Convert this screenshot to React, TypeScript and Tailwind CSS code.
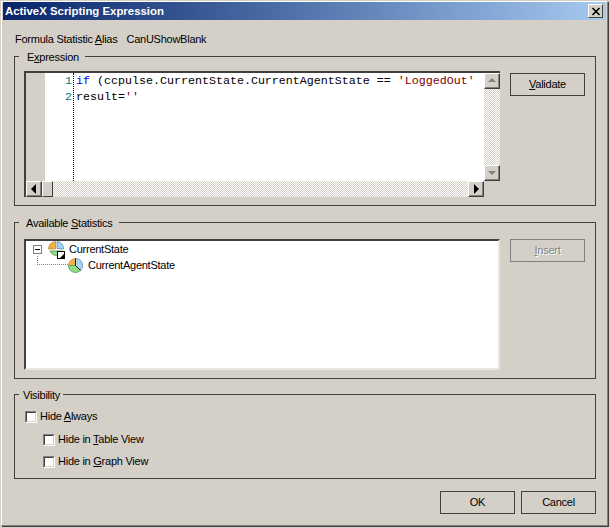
const F = "[font-family:'Liberation_Sans',Arial,sans-serif]";

function Btn({ children, disabled, className }: { children: React.ReactNode; disabled?: boolean; className?: string }) {
  return (
    <div className={`w-[75px] h-[23px] shrink-0 border flex items-center justify-center ${disabled ? "text-[#808080] [text-shadow:1px_1px_0_#fff] border-[#808080]" : "text-black border-[#404040]"} ${className ?? ""}`}>
      {children}
    </div>
  );
}

function Check({ label, className }: { label: React.ReactNode; className?: string }) {
  return (
    <div className={`flex items-center gap-[3px] h-[13px] ${className ?? ""}`}>
      <div className="w-[12px] h-[12px] shrink-0 border border-t-[#808080] border-l-[#808080] border-r-white border-b-white">
        <div className="w-full h-full bg-white border border-t-[#404040] border-l-[#404040] border-r-[#d4d0c8] border-b-[#d4d0c8]" />
      </div>
      <span>{label}</span>
    </div>
  );
}

function Group({ legend, legendClass, className, children }: { legend: React.ReactNode; legendClass: string; className: string; children: React.ReactNode }) {
  return (
    <fieldset className={`border border-[#404040] ml-[14px] w-[582px] ${className}`}>
      <legend className={`ml-[4px] h-[14px] leading-[16px] ${legendClass}`}>{legend}</legend>
      {children}
    </fieldset>
  );
}

function ScrollBtn({ dir, grey, className }: { dir: "up" | "down" | "left" | "right"; grey?: boolean; className?: string }) {
  const pts = { up: "4,9 8,5 12,9", down: "4,6 12,6 8,10", left: "10,3 5,8 10,13", right: "6,3 11,8 6,13" }[dir];
  return (
    <div className={`w-[16px] h-[16px] shrink-0 bg-[#d4d0c8] border border-t-white border-l-white border-r-[#404040] border-b-[#404040] shadow-[inset_-1px_-1px_0_#808080] ${className ?? ""}`}>
      <svg width="14" height="14" viewBox="1 1 14 14">
        <polygon points={pts} fill={grey ? "#808080" : "#000"} />
      </svg>
    </div>
  );
}

const Hatch = "bg-[repeating-conic-gradient(#ffffff_0_25%,#d4d0c8_0_50%)] bg-[length:2px_2px]";

function GroupPie() {
  return (
    <svg width="16" height="17" viewBox="0 0 16 17" className="shrink-0">
      <path d="M7.5 8 L7.5 0.5 A7.5 7.5 0 0 0 0.5 8 Z" fill="#f4b042" stroke="#b88428" strokeWidth="0.7" />
      <path d="M9 7.5 L9 0.5 A7 7 0 0 1 15.5 8 Z" fill="#a8d4f4" stroke="#4c80a8" strokeWidth="0.7" />
      <path d="M2 10 L15 10 A7 7 0 0 1 2 10 Z" fill="#90dc88" stroke="#3c8c40" strokeWidth="0.7" />
    </svg>
  );
}

function Pie() {
  return (
    <svg width="15" height="15" viewBox="0 0 15 15" className="shrink-0">
      <path d="M7.5 7.5 L7.5 0.5 A7 7 0 0 0 0.5 7.5 Z" fill="#f4b042" stroke="#b88428" strokeWidth="0.6" />
      <path d="M7.5 7.5 L7.5 0.5 A7 7 0 0 1 12.5 12.5 Z" fill="#a8d4f4" stroke="#3c6c90" strokeWidth="0.6" />
      <path d="M7.5 7.5 L12.5 12.5 A7 7 0 0 1 0.5 7.5 Z" fill="#90dc88" stroke="#3c8c40" strokeWidth="0.6" />
      <path d="M7.5 0.5 L7.5 7.5 L12.5 12.5" fill="none" stroke="#202020" strokeWidth="1" />
    </svg>
  );
}

export default function App() {
  return (
    <div className={`w-[610px] h-[528px] bg-[#d4d0c8] overflow-hidden ${F} text-black text-[11px] tracking-[-0.25px] p-px`}>
      <div className="w-[607px] h-[525px] border-l border-t border-white border-r border-b border-r-[#808080] border-b-[#808080] shadow-[1px_1px_0_#404040] flex flex-col pl-px">
        <div className="h-[18px] w-[603px] shrink-0 bg-gradient-to-r from-[#0a246a] to-[#a6caf0] flex items-center justify-between pl-[2px] pr-[3px]">
          <span className="text-white font-bold text-[11.4px] tracking-normal pt-[2px]">ActiveX Scripting Expression</span>
          <div className="w-[15px] h-[14px] bg-[#d4d0c8] border border-t-white border-l-white border-r-[#404040] border-b-[#404040] flex items-center justify-center">
            <svg width="10" height="9" viewBox="0 0 10 9"><path d="M1.5 1 L8.5 8 M8.5 1 L1.5 8" stroke="#000" strokeWidth="1.7" /></svg>
          </div>
        </div>
        <div className="-ml-[3px] flex flex-col">
          <div className="h-[29px] pl-[15px] pt-[9px] flex gap-[9px] leading-[20px]">
            <span>Formula Statistic <u>A</u>lias</span>
            <span>CanUShowBlank</span>
          </div>
          <Group legend={<>E<u>x</u>pression</>} legendClass="pl-[8px] pr-[6px]" className="h-[157px]">
            <div className="flex items-start gap-[10px] pl-[9px] pt-[8px]">
              <div className="w-[476px] h-[126px] shrink-0 border-t-2 border-l-2 border-t-[#404040] border-l-[#404040] flex flex-col">
                <div className="flex flex-1 min-h-0">
                  <div className="w-[19px] bg-[#d4d0c8] shrink-0" />
                  <div className="w-[29px] bg-white border-r border-dotted border-black shrink-0 text-right pr-px font-['Liberation_Mono',monospace] text-[11.67px] tracking-normal leading-[16px] text-[#008080]">
                    <div>1</div>
                    <div>2</div>
                  </div>
                  <div className="flex-1 min-w-0 overflow-hidden bg-white pl-[2px] font-['Liberation_Mono',monospace] text-[11.67px] tracking-normal leading-[16px] whitespace-pre">
                    <div><span className="text-[#0000ff]">if</span> (ccpulse.CurrentState.CurrentAgentState == <span className="text-[#800000]">'LoggedOut'</span></div>
                    <div>result=<span className="text-[#800000]">''</span></div>
                  </div>
                  <div className={`w-[16px] shrink-0 flex flex-col justify-between ${Hatch}`}>
                    <ScrollBtn dir="up" grey />
                    <ScrollBtn dir="down" grey />
                  </div>
                </div>
                <div className={`h-[16px] shrink-0 flex items-center mr-[16px] ${Hatch}`}>
                  <ScrollBtn dir="left" />
                  <div className="w-[11px] h-[16px] bg-[#d4d0c8] border border-t-white border-l-white border-r-[#404040] border-b-[#404040]" />
                  <div className="flex-1" />
                  <ScrollBtn dir="right" />
                </div>
              </div>
              <Btn className="mt-[2px]"><span><u>V</u>alidate</span></Btn>
            </div>
          </Group>
          <Group legend={<>Available <u>S</u>tatistics</>} legendClass="pl-[7px] pr-[6px]" className="h-[164px] mt-[9px]">
            <div className="flex items-start gap-[10px] pl-[9px] pt-[10px]">
              <div className="w-[476px] h-[131px] shrink-0 bg-white border-t-2 border-l-2 border-t-[#404040] border-l-[#404040] border-r-2 border-b-2 border-r-[#e8e6e0] border-b-[#e8e6e0] pl-[7px]">
                <div className="flex items-center h-[17px]">
                  <div className="w-[9px] h-[9px] border border-[#808080] flex items-center justify-center shrink-0">
                    <div className="w-[5px] h-px bg-black" />
                  </div>
                  <div className="relative ml-[6px] w-[16px] h-[17px]">
                    <GroupPie />
                    <div className="absolute left-[9px] top-[10px] w-[8px] h-[8px] bg-white border border-black flex items-end justify-end">
                      <div className="w-[4px] h-[4px] bg-black [clip-path:polygon(100%_0,100%_100%,0_100%)]" />
                    </div>
                  </div>
                  <span className="ml-[5px]">CurrentState</span>
                </div>
                <div className="flex items-center h-[15px] pl-[4px]">
                  <div className="w-[31px] h-[9px] -mt-[10px] border-l border-b border-dotted border-[#808080] shrink-0" />
                  <Pie />
                  <span className="ml-[5px]">CurrentAgentState</span>
                </div>
              </div>
              <Btn disabled><span><u>I</u>nsert</span></Btn>
            </div>
          </Group>
          <Group legend="Visibility" legendClass="pl-[4px] pr-[3px]" className="h-[92px] mt-[8px]">
            <div className="flex flex-col pl-[10px] pt-[9px]">
              <Check label={<>Hide <u>A</u>lways</>} />
              <Check label={<>Hide in <u>T</u>able View</>} className="ml-[18px] mt-[10px]" />
              <Check label={<>Hide in <u>G</u>raph View</>} className="ml-[18px] mt-[9px]" />
            </div>
          </Group>
          <div className="flex justify-end gap-[6px] mt-[12px] w-[596px]">
            <Btn>OK</Btn>
            <Btn>Cancel</Btn>
          </div>
        </div>
      </div>
    </div>
  );
}
